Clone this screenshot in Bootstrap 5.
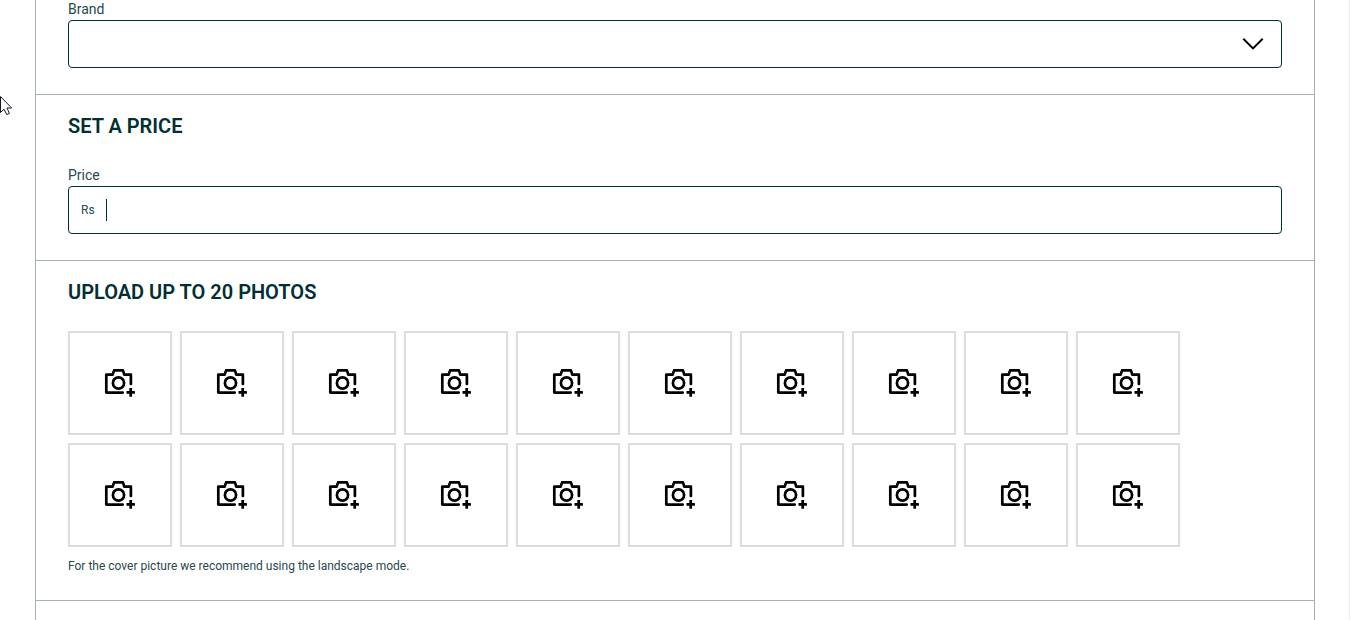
<!DOCTYPE html>
<html lang="en">
<head>
<meta charset="utf-8">
<meta name="viewport" content="width=device-width, initial-scale=1">
<title>Post your ad</title>
<link href="https://cdn.jsdelivr.net/npm/bootstrap@5.3.0/dist/css/bootstrap.min.css" rel="stylesheet">
<style>
  :root { --ink: #002f34; --rule: #a5b0b2; }
  html { overflow: hidden; }
  body { font-family: Roboto, "Liberation Sans", sans-serif; color: var(--ink); font-size: 14px; border-right: 1px solid #ebebeb; padding: 0 34px 0 35px; }
  .ad-form { border: solid var(--rule); border-width: 0 1px; margin-top: -1px; }
  .ad-section { padding: 18px 32px 26px; border-bottom: 1px solid var(--rule); }
  .ad-section:first-child { padding-top: 0; }
  .ad-section:last-child { border-bottom: 0; }
  .ad-section h2 { font-size: 20px; line-height: 26px; font-weight: 600; margin-bottom: 26px; text-transform: uppercase; }
  .field-label { line-height: 20px; margin-bottom: 1px; color: #28494e; }
  .field-box { height: 48px; border: 1px solid var(--ink); border-radius: 4px; background: #fff; }
  .field-box select, .field-box input { appearance: none; outline: 0; color: var(--ink); caret-color: transparent; }
  .arrow { right: 16px; pointer-events: none; }
  .currency { font-size: 12px; color: #28494e; padding: 0 11px 0 12px; }
  .text-caret { width: 1px; height: 22px; background: var(--ink); }
  .photos { gap: 8px; max-width: 1112px; }
  .photo-slot { width: 104px; height: 104px; border: 2px solid #dcdcdc; background: #fff; }
  .hint { font-size: 12px; line-height: 16px; color: #28494e; padding-top: 11px; }
  .pointer { left: 0; top: 95px; }
</style>
</head>
<body>
<svg class="d-none">
  <symbol id="camera-plus" viewBox="0 0 32 32">
    <g fill="none" stroke="#000" stroke-width="2.7" stroke-linejoin="round">
      <path stroke-linecap="round" d="M18.7 25.6H2.3V7.6H8.7L10.1 3.4H18.9L20.3 7.6H26.9V17"/>
      <circle cx="14.5" cy="16" r="5.6"/>
      <path d="M26.7 21.1v8.6M22.5 25.4h8.4"/>
    </g>
  </symbol>
</svg>
<form class="ad-form">
  <section class="ad-section">
    <label class="field-label d-block" for="brand">Brand</label>
    <div class="field-box position-relative d-flex align-items-center">
      <select id="brand" class="w-100 h-100 border-0 bg-transparent px-2"><option></option></select>
      <svg class="arrow position-absolute" width="24" height="24" viewBox="0 0 24 24" fill="none" stroke="#000" stroke-width="2" aria-hidden="true"><path d="M2.3 6.8 12 16.4 21.7 6.8"/></svg>
    </div>
  </section>
  <section class="ad-section">
    <h2>Set a price</h2>
    <label class="field-label d-block" for="price">Price</label>
    <div class="field-box d-flex align-items-center">
      <span class="currency">Rs</span>
      <span class="text-caret"></span>
      <input id="price" type="text" inputmode="numeric" class="flex-grow-1 h-100 border-0 bg-transparent">
    </div>
  </section>
  <section class="ad-section">
    <h2>Upload up to 20 photos</h2>
    <div class="photos d-flex flex-wrap" id="photos"></div>
    <div class="hint">For the cover picture we recommend using the landscape mode.</div>
  </section>
  <section class="ad-section"></section>
</form>
<svg class="pointer position-absolute" width="13" height="22" viewBox="0 0 13 22" aria-hidden="true">
  <path d="M.5 1.5V17.5L4 14.2 6.8 19.6 9.4 18.4 7 13H11.6Z" fill="#fff" stroke="#1b1722"/>
</svg>
<script src="https://cdn.jsdelivr.net/npm/bootstrap@5.3.0/dist/js/bootstrap.bundle.min.js"></script>
<script>
  const photos = document.getElementById('photos');
  for (let i = 1; i <= 20; i++) {
    photos.insertAdjacentHTML('beforeend',
      `<button type="button" class="photo-slot d-flex align-items-center justify-content-center p-0" aria-label="Add photo ${i}"><svg width="32" height="32"><use href="#camera-plus"/></svg></button>`);
  }
</script>
</body>
</html>
